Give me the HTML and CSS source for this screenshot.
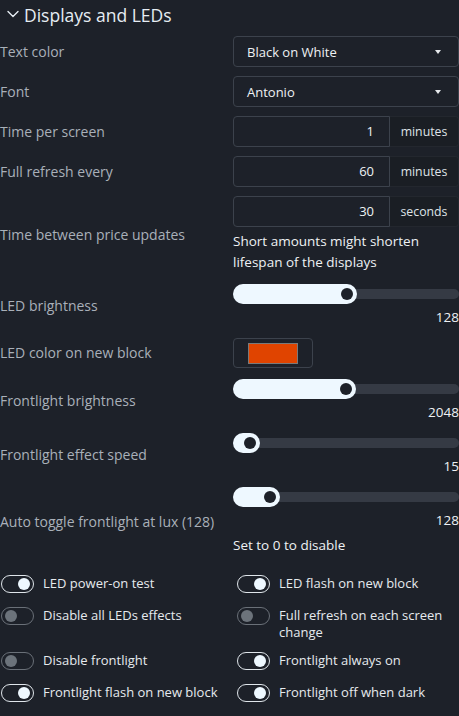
FILE: index.html
```html
<!DOCTYPE html>
<html>
<head>
<meta charset="utf-8">
<link rel="stylesheet" href="styles.css">
</head>
<body>
<div class="page">
  <div class="section-head">
    <svg class="chev" width="12" height="8" viewBox="0 0 12 8"><path d="M1 1.5 L6 6.5 L11 1.5" fill="none" stroke="#e6edf3" stroke-width="1.4" stroke-linecap="round" stroke-linejoin="round"/></svg>
    <h2 class="title">Displays and LEDs</h2>
  </div>

  <div class="row r-std">
    <div class="lbl">Text color</div>
    <div class="ctrl"><div class="select"><span>Black on White</span><span class="caret"></span></div></div>
  </div>
  <div class="row r-std">
    <div class="lbl">Font</div>
    <div class="ctrl"><div class="select"><span>Antonio</span><span class="caret"></span></div></div>
  </div>
  <div class="row r-std">
    <div class="lbl">Time per screen</div>
    <div class="ctrl"><div class="igroup"><div class="inp">1</div><div class="addon">minutes</div></div></div>
  </div>
  <div class="row r-std">
    <div class="lbl">Full refresh every</div>
    <div class="ctrl"><div class="igroup"><div class="inp">60</div><div class="addon">minutes</div></div></div>
  </div>
  <div class="row r-wide">
    <div class="lbl">Time between price updates</div>
    <div class="ctrl">
      <div class="igroup"><div class="inp">30</div><div class="addon">seconds</div></div>
      <div class="help">Short amounts might shorten lifespan of the displays</div>
    </div>
  </div>
  <div class="row r-wide">
    <div class="lbl">LED brightness</div>
    <div class="ctrl">
      <div class="range"><div class="track"></div><div class="fill" style="width:124px"><span class="thumb"></span></div></div>
      <div class="val">128</div>
    </div>
  </div>
  <div class="row r-wide">
    <div class="lbl">LED color on new block</div>
    <div class="ctrl"><div class="color"><span class="swatch"></span></div></div>
  </div>
  <div class="row r-wide">
    <div class="lbl">Frontlight brightness</div>
    <div class="ctrl">
      <div class="range"><div class="track"></div><div class="fill" style="width:123px"><span class="thumb"></span></div></div>
      <div class="val">2048</div>
    </div>
  </div>
  <div class="row r-wide">
    <div class="lbl">Frontlight effect speed</div>
    <div class="ctrl">
      <div class="range"><div class="track"></div><div class="fill" style="width:27px"><span class="thumb"></span></div></div>
      <div class="val">15</div>
    </div>
  </div>
  <div class="row r-last">
    <div class="lbl">Auto toggle frontlight at lux (128)</div>
    <div class="ctrl">
      <div class="range"><div class="track"></div><div class="fill" style="width:47px"><span class="thumb"></span></div></div>
      <div class="val">128</div>
      <div class="help help-one">Set to 0 to disable</div>
    </div>
  </div>

  <div class="switches">
    <div class="sw-item"><span class="sw on"><span class="knob"></span></span><span class="sw-lbl">LED power-on test</span></div>
    <div class="sw-item"><span class="sw on"><span class="knob"></span></span><span class="sw-lbl">LED flash on new block</span></div>
    <div class="sw-item"><span class="sw"><span class="knob"></span></span><span class="sw-lbl">Disable all LEDs effects</span></div>
    <div class="sw-item"><span class="sw"><span class="knob"></span></span><span class="sw-lbl">Full refresh on each screen change</span></div>
    <div class="sw-item"><span class="sw"><span class="knob"></span></span><span class="sw-lbl">Disable frontlight</span></div>
    <div class="sw-item"><span class="sw on"><span class="knob"></span></span><span class="sw-lbl">Frontlight always on</span></div>
    <div class="sw-item"><span class="sw on"><span class="knob"></span></span><span class="sw-lbl">Frontlight flash on new block</span></div>
    <div class="sw-item"><span class="sw on"><span class="knob"></span></span><span class="sw-lbl">Frontlight off when dark</span></div>
  </div>
</div>
</body>
</html>
```

FILE: styles.css
```css
html, body {
  margin: 0;
  padding: 0;
  background: #1d2129;
}
body {
  font-family: "Open Sans", "Noto Sans", sans-serif;
  font-size: 14px;
  color: #e3e7eb;
  width: 459px;
  height: 716px;
  overflow: hidden;
}
.page {
  width: 459px;
}
.section-head {
  display: flex;
  align-items: center;
  height: 30px;
  margin-bottom: 6px;
  padding-left: 7px;
}
.chev {
  margin-right: 5px;
  margin-top: -2px;
}
.title {
  margin: 0;
  font-size: 17.5px;
  font-weight: 500;
  color: #e6edf3;
  line-height: 30px;
}
.row {
  display: grid;
  grid-template-columns: 233px 226px;
  align-items: center;
}
.r-std { margin-bottom: 9px; }
.r-wide { margin-bottom: 11px; }
.r-last { margin-bottom: 19px; }
.lbl {
  color: #a9b0b9;
  line-height: 20px;
}
.ctrl {
  display: flex;
  flex-direction: column;
}
.select {
  box-sizing: border-box;
  height: 31px;
  border: 1px solid #3c424c;
  border-radius: 4px;
  display: flex;
  align-items: center;
  justify-content: space-between;
  padding: 0 17px 0 13px;
  color: #eef1f4;
  font-size: 13px;
}
.caret {
  width: 0;
  height: 0;
  border-left: 3.5px solid transparent;
  border-right: 3.5px solid transparent;
  border-top: 4px solid #e6e9ec;
}
.igroup {
  display: flex;
  height: 31px;
}
.inp {
  box-sizing: border-box;
  width: 157px;
  height: 31px;
  border: 1px solid #3c424c;
  border-radius: 4px 0 0 4px;
  text-align: right;
  padding-right: 15px;
  line-height: 29px;
  color: #eef1f4;
  font-size: 13px;
}
.addon {
  box-sizing: border-box;
  flex: 1;
  height: 31px;
  border: 1px solid #23272e;
  border-left: none;
  background: #1a1e24;
  border-radius: 0 4px 4px 0;
  text-align: center;
  line-height: 29px;
  color: #dfe3e7;
  font-size: 12.3px;
}
.help {
  margin-top: 4px;
  line-height: 21px;
  color: #eef1f4;
  font-size: 13.5px;
}
.help-one {
  margin-top: 5px;
}
.range {
  position: relative;
  height: 20px;
}
.track {
  margin-top: 5px;
  height: 10px;
  border-radius: 5px;
  background: #353a44;
}
.fill {
  position: absolute;
  left: 0;
  top: 0;
  height: 20px;
  border-radius: 10px;
  background: #eef8ff;
}
.thumb {
  position: absolute;
  right: 4px;
  top: 4px;
  width: 12px;
  height: 12px;
  border-radius: 50%;
  background: #1d2129;
}
.val {
  margin-top: 3px;
  line-height: 20px;
  text-align: right;
  color: #eef1f4;
  font-size: 13.5px;
}
.color {
  box-sizing: border-box;
  width: 80px;
  height: 30px;
  border: 1px solid #3c424c;
  border-radius: 4px;
  padding: 4px 14px;
}
.swatch {
  display: block;
  box-sizing: border-box;
  width: 50px;
  height: 21px;
  background: #e04400;
  border: 1px solid #7a7a7a;
}
.switches {
  display: grid;
  grid-template-columns: 236px 223px;
  row-gap: 11px;
  padding-left: 1px;
}
.sw-item {
  display: flex;
  align-items: flex-start;
  min-height: 21px;
}
.sw {
  box-sizing: border-box;
  position: relative;
  flex: none;
  width: 33px;
  height: 18px;
  border: 1px solid #6a7078;
  border-radius: 9px;
  margin-right: 9px;
}
.sw.on {
  border-color: #dfe5ea;
}
.knob {
  position: absolute;
  top: 2px;
  left: 3px;
  width: 12px;
  height: 12px;
  border-radius: 50%;
  background: #6c737b;
}
.sw.on .knob {
  left: auto;
  right: 3px;
  background: #eef8ff;
}
.sw-lbl {
  line-height: 17px;
  font-size: 13px;
  color: #e6eaee;
}
```
